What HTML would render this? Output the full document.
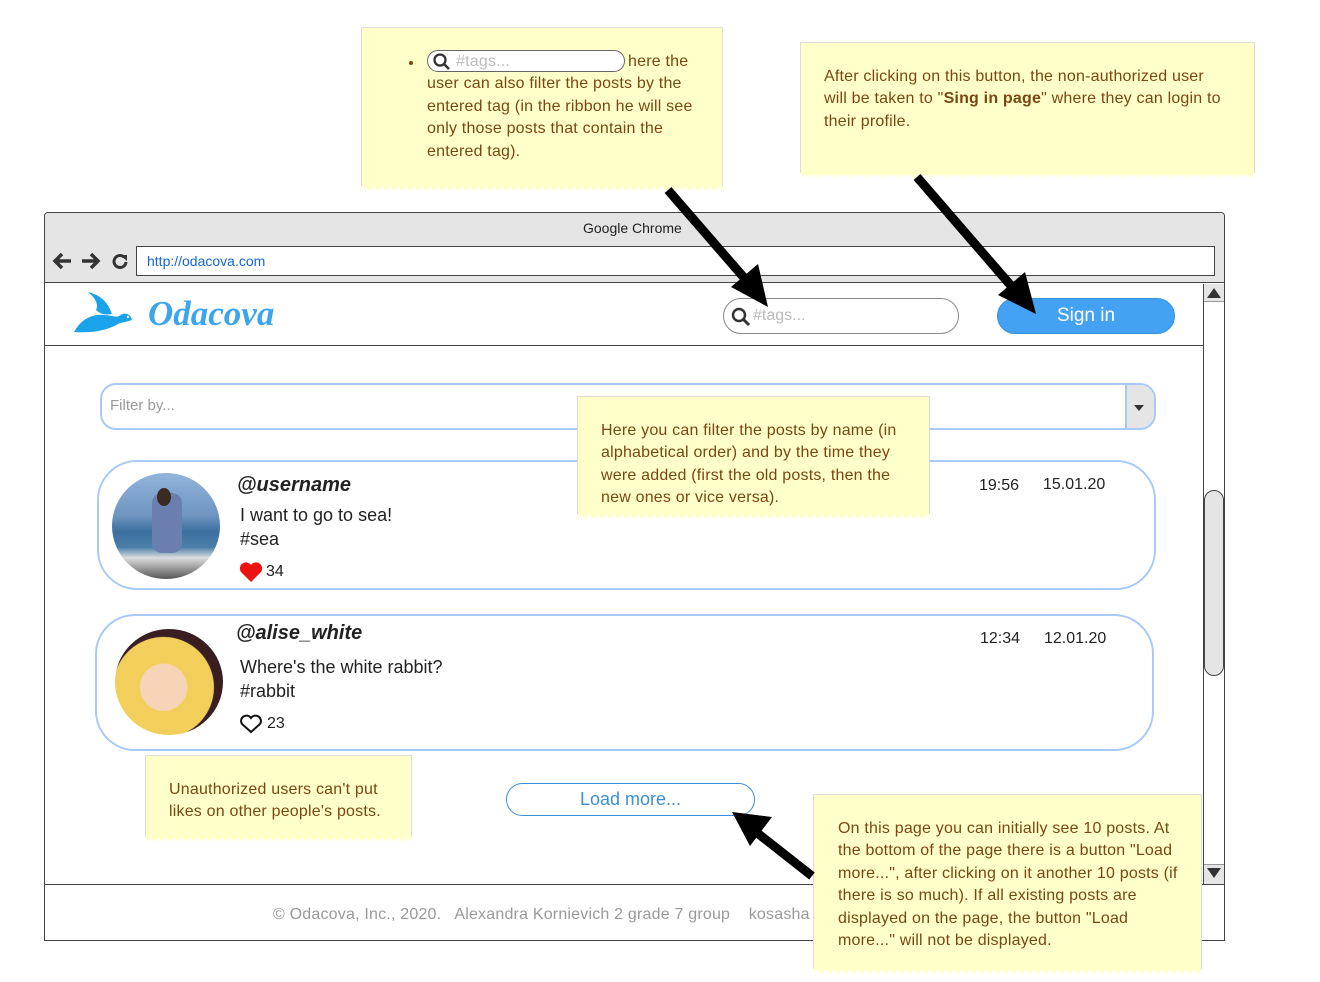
<!DOCTYPE html>
<html><head><meta charset="utf-8"><style>
*{margin:0;padding:0;box-sizing:border-box}
body{width:1320px;height:982px;background:#fff;position:relative;overflow:hidden;font-family:"Liberation Sans",Arial,sans-serif}
.a{position:absolute}
.note{position:absolute;background:#ffffc9;border:1px solid #ddd;border-bottom:none;color:#7a4712;font-size:16px;line-height:22.4px;letter-spacing:0.2px}
.zz{position:absolute;left:0;right:0;bottom:-6px;height:6px;background:linear-gradient(135deg,#ffffc9 33%,transparent 34%) 0 0/8px 6px repeat-x,linear-gradient(225deg,#ffffc9 33%,transparent 34%) 0 0/8px 6px repeat-x}
.post{position:absolute;border:2px solid #a9c9f7;border-radius:40px;background:#fff}
.av{position:absolute;width:108px;height:106px;border-radius:50%;overflow:hidden}
.un{position:absolute;font-weight:bold;font-style:italic;font-size:20px;color:#222}
.tx{position:absolute;font-size:18px;color:#222;line-height:24px}
.tm{position:absolute;font-size:16px;color:#222}
</style></head><body>

<div class="a" style="left:44px;top:212px;width:1181px;height:729px;border:1px solid #444;border-radius:4px 4px 0 0;background:#fff"></div>
<div class="a" style="left:45px;top:213px;width:1179px;height:70px;background:#e5e5e5;border-radius:4px 4px 0 0;border-bottom:1px solid #444"></div>
<div class="a" style="left:583px;top:220px;font-size:14px;color:#222">Google Chrome</div>
<svg class="a" style="left:52px;top:250px" width="80" height="22" viewBox="0 0 80 22">
<path d="M3 11h16M10 4l-7 7 7 7" stroke="#333" stroke-width="3.5" fill="none"/>
<path d="M30 11h16M39 4l7 7-7 7" stroke="#333" stroke-width="3.5" fill="none"/>
<path d="M72 7a6 6 0 1 0 2 5" stroke="#333" stroke-width="3" fill="none"/><path d="M68 5l7 0 0 6z" fill="#333"/>
</svg>
<div class="a" style="left:136px;top:246px;width:1079px;height:30px;border:1px solid #444;background:#fff"></div>
<div class="a" style="left:147px;top:253px;font-size:14px;color:#1565d8">http://odacova.com</div>

<div class="a" style="left:45px;top:345px;width:1158px;height:1px;background:#444"></div>
<svg class="a" style="left:72px;top:290px" width="64" height="46" viewBox="0 0 64 46">
<path d="M16 2 Q34 6 40 24 Q30 26 24 20 Q28 12 16 2z" fill="#1aa3e8"/>
<path d="M2 42 Q14 20 40 26 Q46 28 50 24 Q58 22 60 30 Q54 32 48 33 Q30 44 2 42z" fill="#1aa3e8"/>
<circle cx="56" cy="27" r="1.2" fill="#fff"/>
</svg>
<div class="a" style="left:148px;top:294px;font-family:'Liberation Serif',serif;font-style:italic;font-weight:bold;font-size:35px;color:#3ca5ee;letter-spacing:0px">Odacova</div>
<div class="a" style="left:723px;top:298px;width:236px;height:36px;border:1px solid #888;border-radius:18px;background:#fff"></div>
<svg class="a" style="left:730px;top:306px" width="22" height="22"><circle cx="9" cy="9" r="6" stroke="#333" stroke-width="2.5" fill="none"/><path d="M13 13l6 6" stroke="#333" stroke-width="3"/></svg>
<div class="a" style="left:753px;top:307px;font-size:16px;color:#bbb">#tags...</div>
<div class="a" style="left:997px;top:298px;width:178px;height:36px;border-radius:18px;background:#44a2f5;border:1px solid #3b8fd9;color:#fff;font-size:19px;text-align:center;line-height:34px">Sign in</div>

<div class="a" style="left:1203px;top:284px;width:21px;height:600px;border-left:1px solid #444;background:#fff"></div>
<div class="a" style="left:1204px;top:284px;width:20px;height:18px;background:#e5e5e5;border-bottom:1px solid #999"></div>
<div class="a" style="left:1207px;top:288px;width:0;height:0;border-left:7px solid transparent;border-right:7px solid transparent;border-bottom:10px solid #333"></div>
<div class="a" style="left:1204px;top:864px;width:20px;height:20px;background:#e5e5e5;border-top:1px solid #999"></div>
<div class="a" style="left:1207px;top:868px;width:0;height:0;border-left:7px solid transparent;border-right:7px solid transparent;border-top:10px solid #333"></div>
<div class="a" style="left:1204px;top:490px;width:20px;height:186px;background:#e5e5e5;border:1px solid #444;border-radius:10px"></div>

<div class="a" style="left:100px;top:383px;width:1056px;height:47px;border:2px solid #a9c9f7;border-radius:16px;background:#fff;overflow:hidden"><div class="a" style="right:0;top:0;width:29px;height:45px;background:#e5e5e5;border-left:2px solid #a9c9f7"></div><div class="a" style="right:10px;top:20px;border-left:5px solid transparent;border-right:5px solid transparent;border-top:6px solid #333"></div></div>
<div class="a" style="left:110px;top:397px;font-size:15px;color:#999">Filter by...</div>

<div class="post" style="left:97px;top:460px;width:1059px;height:130px"></div>
<div class="av" style="left:112px;top:473px;background:linear-gradient(#92b4dc 0%,#6f95c0 40%,#3c6fa0 55%,#4a7ea8 70%,#ddd 80%,#555 100%)">
<div class="a" style="left:40px;top:20px;width:30px;height:60px;background:#6a7fb0;border-radius:10px"></div><div class="a" style="left:45px;top:15px;width:14px;height:18px;background:#3a2a20;border-radius:50%"></div></div>
<div class="un" style="left:237px;top:474px">@username</div>
<div class="tx" style="left:240px;top:503px">I want to go to sea!<br>#sea</div>
<svg class="a" style="left:239px;top:561px" width="24" height="22"><path d="M12 21 L2 11 A5.5 5.5 0 0 1 12 4 A5.5 5.5 0 0 1 22 11z" fill="#ee1111"/></svg>
<div class="tm" style="left:266px;top:563px">34</div>
<div class="tm" style="left:979px;top:477px">19:56</div>
<div class="tm" style="left:1043px;top:476px">15.01.20</div>

<div class="post" style="left:95px;top:614px;width:1059px;height:137px"></div>
<div class="av" style="left:115px;top:629px;background:radial-gradient(circle at 45% 55%,#f7d4b8 0 28%,#f2cf5a 29% 60%,#3a1f22 61%)"></div>
<div class="un" style="left:236px;top:622px">@alise_white</div>
<div class="tx" style="left:240px;top:655px">Where's the white rabbit?<br>#rabbit</div>
<svg class="a" style="left:239px;top:714px" width="24" height="20"><path d="M12 18 L3 10 A4.8 4.8 0 0 1 12 4 A4.8 4.8 0 0 1 21 10z" fill="none" stroke="#111" stroke-width="2"/></svg>
<div class="tm" style="left:267px;top:715px">23</div>
<div class="tm" style="left:980px;top:630px">12:34</div>
<div class="tm" style="left:1044px;top:630px">12.01.20</div>

<div class="a" style="left:506px;top:783px;width:249px;height:33px;border:1px solid #3b8fd9;border-radius:17px;color:#3b8fd9;font-size:18px;text-align:center;line-height:31px">Load more...</div>

<div class="a" style="left:45px;top:884px;width:1179px;height:1px;background:#444"></div>
<div class="a" style="left:273px;top:906px;font-size:16px;color:#999;white-space:nowrap;letter-spacing:0.2px">© Odacova, Inc., 2020.&nbsp;&nbsp; Alexandra Kornievich 2 grade 7 group &nbsp;&nbsp; kosasha</div>

<div class="note" style="left:361px;top:27px;width:362px;height:159px"><div class="zz"></div>
<div class="a" style="left:47px;top:33px;width:4px;height:4px;border-radius:50%;background:#7a4712"></div>
<div class="a" style="left:65px;top:22px;width:198px;height:22px;border:1px solid #666;border-radius:11px;background:#fff"></div>
<svg class="a" style="left:70px;top:24px" width="20" height="20"><circle cx="8" cy="8" r="5.5" stroke="#333" stroke-width="2.3" fill="none"/><path d="M12 12l5 5" stroke="#333" stroke-width="2.6"/></svg>
<div class="a" style="left:94px;top:23px;color:#bbb">#tags...</div>
<div class="a" style="left:65px;top:23px;width:272px;text-indent:201px">here the user can also filter the posts by the entered tag (in the ribbon he will see only those posts that contain the entered tag).</div>
</div>
<div class="note" style="left:800px;top:42px;width:455px;height:131px"><div class="zz"></div><div class="a" style="left:23px;top:23px;width:404px">After clicking on this button, the non-authorized user will be taken to "<b>Sing in page</b>" where they can login to their profile.</div></div>
<div class="note" style="left:577px;top:396px;width:353px;height:118px"><div class="zz"></div><div class="a" style="left:23px;top:23px;width:305px">Here you can filter the posts by name (in alphabetical order) and by the time they were added (first the old posts, then the new ones or vice versa).</div></div>
<div class="note" style="left:145px;top:755px;width:267px;height:82px"><div class="zz"></div><div class="a" style="left:23px;top:23px;width:225px">Unauthorized users can't put likes on other people's posts.</div></div>
<div class="note" style="left:813px;top:794px;width:389px;height:175px"><div class="zz"></div><div class="a" style="left:24px;top:23px;width:345px">On this page you can initially see 10 posts. At the bottom of the page there is a button "Load more...", after clicking on it another 10 posts (if there is so much). If all existing posts are displayed on the page, the button "Load more..." will not be displayed.</div></div>

<svg class="a" style="left:0;top:0" width="1320" height="982">
<line x1="668" y1="190" x2="746" y2="280" stroke="#000" stroke-width="9"/>
<polygon points="768,307 731,287 758,264" fill="#000"/>
<line x1="917" y1="177" x2="1013" y2="288" stroke="#000" stroke-width="9"/>
<polygon points="1036,314 998,295 1025,272" fill="#000"/>
<line x1="812" y1="876" x2="756" y2="832" stroke="#000" stroke-width="9"/>
<polygon points="732,812 772,817 750,846" fill="#000"/>
</svg>
</body></html>
